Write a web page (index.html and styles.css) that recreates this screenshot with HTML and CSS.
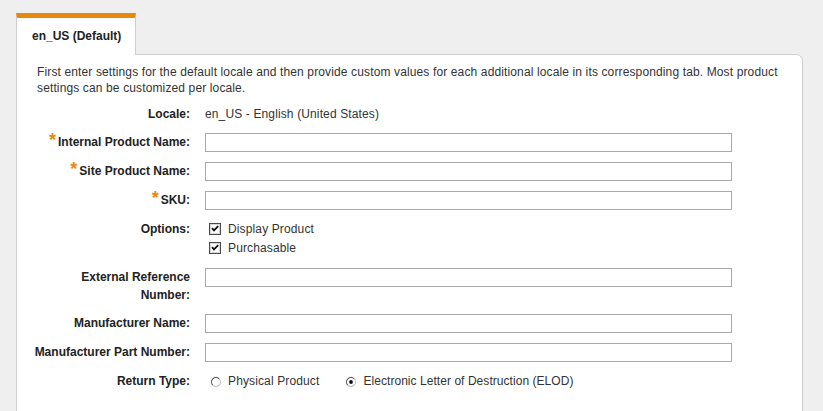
FILE: index.html
```html
<!DOCTYPE html>
<html lang="en">
<head>
<meta charset="utf-8">
<title>Product settings</title>
<link rel="stylesheet" href="styles.css">
</head>
<body>
<div class="page">
  <div class="tabs">
    <div class="tab active">en_US (Default)</div>
  </div>
  <div class="panel">
    <p class="intro">First enter settings for the default locale and then provide custom values for each additional locale in its corresponding tab. Most product settings can be customized per locale.</p>
    <div class="form">
      <div class="label locale-row">Locale:</div>
      <div class="value locale-row">en_US - English (United States)</div>

      <div class="label"><span class="req">*</span>Internal Product Name:</div>
      <div class="value"><input class="text" type="text"></div>

      <div class="label"><span class="req">*</span>Site Product Name:</div>
      <div class="value"><input class="text" type="text"></div>

      <div class="label"><span class="req">*</span>SKU:</div>
      <div class="value"><input class="text" type="text"></div>

      <div class="label">Options:</div>
      <div class="value options">
        <label class="check"><span class="box"><svg width="12" height="12" viewBox="0 0 12 12"><rect x="0.5" y="0.5" width="11" height="11" fill="#fff" stroke="#4a4a4a"/><rect x="1.5" y="1.5" width="9" height="9" fill="none" stroke="#d8d8d8"/><path d="M3 5.2 L5 7.4 L9.2 3.2" fill="none" stroke="#111" stroke-width="1.8"/></svg></span>Display Product</label>
        <label class="check"><span class="box"><svg width="12" height="12" viewBox="0 0 12 12"><rect x="0.5" y="0.5" width="11" height="11" fill="#fff" stroke="#4a4a4a"/><rect x="1.5" y="1.5" width="9" height="9" fill="none" stroke="#d8d8d8"/><path d="M3 5.2 L5 7.4 L9.2 3.2" fill="none" stroke="#111" stroke-width="1.8"/></svg></span>Purchasable</label>
      </div>

      <div class="label two-line">External Reference Number:</div>
      <div class="value"><input class="text" type="text"></div>

      <div class="label">Manufacturer Name:</div>
      <div class="value"><input class="text" type="text"></div>

      <div class="label">Manufacturer Part Number:</div>
      <div class="value"><input class="text" type="text"></div>

      <div class="label">Return Type:</div>
      <div class="value radios">
        <label class="radio"><span class="dot"><svg width="12" height="12" viewBox="0 0 12 12"><circle cx="6" cy="6" r="4.5" fill="#fff"/><path d="M2.8 9.2 A4.5 4.5 0 0 1 9.2 2.8" fill="none" stroke="#5f5f5f" stroke-width="1.2"/><path d="M9.2 2.8 A4.5 4.5 0 0 1 2.8 9.2" fill="none" stroke="#c4c4c4" stroke-width="1.2"/></svg></span>Physical Product</label>
        <label class="radio"><span class="dot"><svg width="12" height="12" viewBox="0 0 12 12"><circle cx="6" cy="6" r="4.5" fill="#fff"/><path d="M2.8 9.2 A4.5 4.5 0 0 1 9.2 2.8" fill="none" stroke="#5f5f5f" stroke-width="1.2"/><path d="M9.2 2.8 A4.5 4.5 0 0 1 2.8 9.2" fill="none" stroke="#c4c4c4" stroke-width="1.2"/><circle cx="6" cy="6" r="1.9" fill="#111"/></svg></span>Electronic Letter of Destruction (ELOD)</label>
      </div>
    </div>
  </div>
</div>
</body>
</html>
```
FILE: styles.css
```css
html, body {
  margin: 0;
  padding: 0;
  background: #efefef;
  font-family: "Liberation Sans", Arial, sans-serif;
  font-size: 12px;
  color: #333;
  letter-spacing: 0.13px;
}

.page {
  padding: 13px 20px 0 16px;
}

.tabs {
  display: flex;
  position: relative;
  z-index: 1;
  margin-bottom: -1px;
}

.tab {
  box-sizing: border-box;
  width: 120px;
  height: 42px;
  line-height: 36px;
  padding-left: 15px;
  background: #fff;
  border-top: 5px solid #e8890c;
  border-left: 1px solid #cfcfcf;
  border-right: 1px solid #cfcfcf;
  font-weight: bold;
  color: #222;
  letter-spacing: 0;
}

.panel {
  background: #fff;
  border: 1px solid #cfcfcf;
  border-top-right-radius: 7px;
  padding: 9px 20px 40px 20px;
  min-height: 340px;
}

.intro {
  margin: 0;
  line-height: 16px;
}

.form {
  display: grid;
  grid-template-columns: 157px 527px;
  column-gap: 15px;
  row-gap: 10px;
  margin-top: 10px;
  margin-left: -4px;
}

.label {
  text-align: right;
  font-weight: bold;
  color: #222;
  line-height: 19px;
  white-space: nowrap;
  letter-spacing: 0;
}

.label.two-line {
  white-space: normal;
  line-height: 18px;
  padding-left: 40px;
}

.value {
  line-height: 19px;
}

.form .locale-row {
  line-height: 17px;
}

.req {
  color: #e8890c;
  font-size: 18px;
  line-height: 0;
  margin-right: 2px;
  font-weight: bold;
}

.text {
  display: block;
  box-sizing: border-box;
  width: 527px;
  height: 19px;
  margin: 0;
  border: 1px solid #a9a9a9;
  background: #fff;
  font: inherit;
  padding: 0 3px;
}

.options {
  display: flex;
  flex-direction: column;
}

.check {
  display: flex;
  align-items: center;
  height: 19px;
}

.check .box {
  display: block;
  width: 12px;
  height: 12px;
  margin: 0 7px 0 4px;
  position: relative;
  top: -0.5px;
}

.check .box svg,
.radio .dot svg {
  display: block;
}

.radios {
  display: flex;
  align-items: center;
  height: 19px;
}

.radio {
  display: flex;
  align-items: center;
  margin-right: 21px;
}

.radio .dot {
  display: block;
  width: 12px;
  height: 12px;
  margin: 0 6px 0 5px;
}

.radio + .radio {
  letter-spacing: 0.05px;
}
```
